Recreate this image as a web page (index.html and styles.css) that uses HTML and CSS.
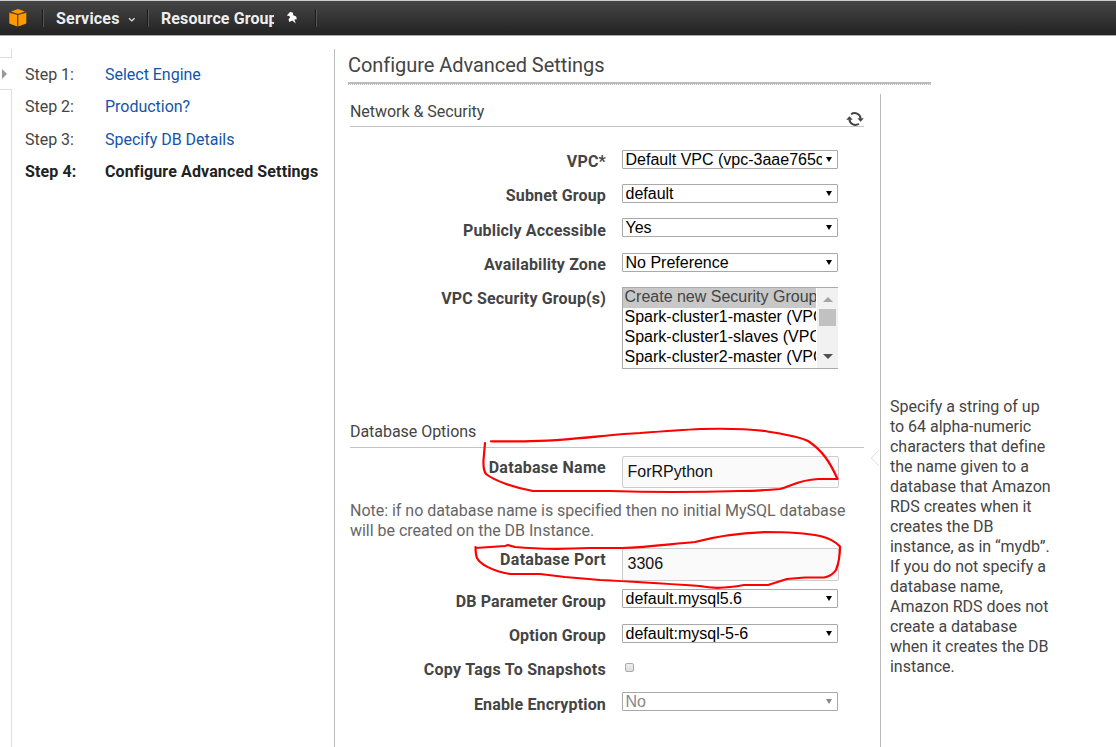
FILE: index.html
```html
<!DOCTYPE html>
<html lang="en">
<head>
<meta charset="utf-8">
<title>Configure Advanced Settings</title>
<link rel="stylesheet" href="styles.css">
</head>
<body>
<header class="topbar">
  <svg class="logo" width="18" height="18" viewBox="0 0 18 18"><path fill="#f90" d="M9 0l7 2.5-7 2.4-7-2.4z"/><path fill="#f90" d="M.3 3.6l8 2.1v11.8l-8-2.9zM17.3 3.6l-8 2.1v11.8l8-2.9z"/><path d="M.3 3.6L9 5.4l8.300-1.800" stroke="#6b430d" stroke-width=".6" fill="none"/></svg>
  <span class="sep sep-a"></span>
  <span class="nav-item services">Services</span>
  <svg class="chev" width="8" height="6" viewBox="0 0 8 6"><path d="M1 1.300l2.800 2.600 2.800-2.600" fill="none" stroke="#ddd" stroke-width="1.4"/></svg>
  <span class="sep sep-b"></span>
  <span class="nav-item groups">Resource Groups</span>
  <svg class="pin" width="12" height="12" viewBox="0 0 12 12"><path fill="#fff" d="M4 0L6.800.6 7.300 3.200l2.900 1.400.6 2.700-2.500.1L9.800 11.500 6.200 8.400 3.300 10 2.500 7.500 4.100 5.300 3.300 3.900.8 3.500z"/></svg>
  <span class="sep sep-c"></span>
</header>
<div class="page">
  <aside class="rail">
    <div class="rail-top"></div>
    <div class="rail-toggle"><svg width="6" height="12" viewBox="0 0 6 12"><path d="M0 1l5 5-5 5z" fill="#999"/></svg></div>
    <div class="rail-bottom"></div>
  </aside>
  <nav class="steps">
    <div class="step"><span class="num">Step 1:</span><a>Select Engine</a></div>
    <div class="step"><span class="num">Step 2:</span><a>Production?</a></div>
    <div class="step"><span class="num">Step 3:</span><a>Specify DB Details</a></div>
    <div class="step current"><span class="num">Step 4:</span><span>Configure Advanced Settings</span></div>
  </nav>
  <main class="main">
    <h1>Configure Advanced Settings</h1>
    <div class="columns">
      <div class="form">
        <h2 class="section-title first">Network &amp; Security
          <svg class="refresh" width="18" height="14" viewBox="0 0 18 14"><g fill="none" stroke="#444" stroke-width="2"><path d="M5.100 2.300A6 6 0 0 1 14.600 6.600"/><path d="M12.900 11.700A6 6 0 0 1 3.400 7.400"/></g><path fill="#444" d="M11.300 6.300h6.500l-3.100 3.400zM.2 7.700h6.500L3.400 4.200z"/></svg>
        </h2>
        <div class="rows network">
          <div class="row"><label>VPC*</label><div class="select"><span>Default VPC (vpc-3aae765c)</span><i></i></div></div>
          <div class="row"><label>Subnet Group</label><div class="select"><span>default</span><i></i></div></div>
          <div class="row tall"><label>Publicly Accessible</label><div class="select"><span>Yes</span><i></i></div></div>
          <div class="row"><label>Availability Zone</label><div class="select"><span>No Preference</span><i></i></div></div>
          <div class="row list-row"><label>VPC Security Group(s)</label>
            <div class="listbox">
              <div class="options">
                <div class="option selected">Create new Security Group</div>
                <div class="option">Spark-cluster1-master (VPC)</div>
                <div class="option">Spark-cluster1-slaves (VPC)</div>
                <div class="option">Spark-cluster2-master (VPC)</div>
              </div>
              <div class="scroll"><b class="up"></b><b class="thumb"></b><b class="down"></b></div>
            </div>
          </div>
        </div>
        <h2 class="section-title second">Database Options</h2>
        <div class="rows database">
          <div class="row name-row wide"><label>Database Name</label><div class="input">ForRPython</div></div>
          <p class="note">Note: if no database name is specified then no initial MySQL database<br>will be created on the DB Instance.</p>
          <div class="row port-row wide"><label>Database Port</label><div class="input port">3306</div></div>
          <div class="row tall"><label>DB Parameter Group</label><div class="select"><span>default.mysql5.6</span><i></i></div></div>
          <div class="row"><label>Option Group</label><div class="select"><span>default:mysql-5-6</span><i></i></div></div>
          <div class="row wide"><label>Copy Tags To Snapshots</label><div class="check"></div></div>
          <div class="row last"><label>Enable Encryption</label><div class="select disabled"><span>No</span><i></i></div></div>
        </div>
      </div>
      <aside class="help">
        <svg class="notch" width="10" height="18" viewBox="0 0 10 18"><path d="M9 1L1.500 9 9 17" fill="none" stroke="#ddd"/></svg>
        <p>Specify a string of up<br>to 64 alpha-numeric<br>characters that define<br>the name given to a<br>database that Amazon<br>RDS creates when it<br>creates the DB<br>instance, as in “mydb”.<br>If you do not specify a<br>database name,<br>Amazon RDS does not<br>create a database<br>when it creates the DB<br>instance.</p>
      </aside>
    </div>
  </main>
</div>
<svg class="marks" width="1116" height="747" viewBox="0 0 1116 747">
  <path d="M491 441.300H524C570 441 610 434 640 433Q680 430 701 429Q740 428 765 431C782 434 798 436 808 441C822 450 830 462 837.500 479H818C798 480 792 486 780 489Q755 491 740 491Q670 493 610 491H533C515 488 495 481 486 474Q483 470 483.500 460L485 443"/>
  <path d="M475.500 548L505 546L508 545L515 547Q545 550 590 548H622C650 547 670 544 695 542C720 535 740 533 765 532Q800 532 820 536Q833 539 840 546.500Q840 560 836 570Q832 576 824 577.500L805 577.500L787 579L768 585H744Q718 590 700 586C670 584 640 582 600 580L565 577L540 574H510C492 571 480 564 477 558Q475.500 554 475.500 547"/>
</svg>
</body>
</html>
```
FILE: styles.css
```css
* { box-sizing: border-box; }
body { margin: 0; height: 747px; overflow: hidden; background: #fff; color: #444; font: 16px/20px Roboto, sans-serif; letter-spacing: -.02px; }
.topbar { display: flex; align-items: center; height: 36px; padding-left: 9px; border-top: 1px solid #ccc; border-bottom: 1px solid #aaa; background: linear-gradient(#444 0, #3b3b3b 30%, #222 100%); color: #eee; }
.logo { flex: none; }
.sep { flex: none; width: 2px; height: 18px; border-left: 1px solid #1b1b1b; border-right: 1px solid #555; }
.sep-a { margin-left: 15px; }
.nav-item { flex: none; overflow: hidden; white-space: nowrap; font-weight: 700; letter-spacing: .1px; line-height: 22px; padding-top: 1px; }
.services { width: 65px; margin-left: 12px; letter-spacing: .2px; }
.chev { margin: 3px 0 0 7px; }
.sep-b { margin-left: 11px; }
.groups { width: 113px; margin-left: 12px; }
.pin { margin-left: 12px; }
.sep-c { margin-left: 17px; }
.page { display: flex; height: 711px; padding-top: 13px; }
.rail { display: flex; flex-direction: column; width: 12px; }
.rail-top { height: 9px; border: solid #ddd; border-width: 0 1px 1px 0; }
.rail-toggle { display: flex; align-items: center; height: 31px; padding: 0 0 0 2px; }
.rail-bottom { flex: 1; border: solid #ddd; border-width: 1px 1px 0 0; }
.steps { width: 323px; padding: 16px 0 0 13px; border-right: 1px solid #bbb; }
.step { display: flex; height: 32.4px; }
.num { width: 80px; }
.step a { color: #1155aa; }
.current { color: #222; font-weight: 700; letter-spacing: .12px; }
.main { width: 781px; padding-left: 13px; }
h1 { width: 583px; height: 36px; margin: 0; padding-top: 4px; font-size: 20px; font-weight: 400; line-height: 24px; letter-spacing: -.05px; background: linear-gradient(#bbb, #bbb) 0 33px / 100% 2px no-repeat, repeating-linear-gradient(90deg, #bbb 0 1px, #fff 1px 2px) 0 35px / 100% 1px no-repeat; }
.columns { display: flex; height: 653px; margin-top: 9px; }
.form { width: 532px; padding: 7px 16px 0 2px; }
.section-title { display: flex; justify-content: space-between; height: 26px; margin: 0; border-bottom: 1px solid #c4c4c4; font-size: 16px; font-weight: 400; line-height: 20px; letter-spacing: -.04px; }
.first { line-height: 22px; }
.refresh { margin: 11px 0 0 0; }
.second { margin-top: 53px; }
.network { padding-top: 23px; }
.database { padding-top: 8px; }
.row { display: flex; gap: 16px; height: 34px; }
.tall { height: 35px; }
.row label { width: 256px; padding-top: 2px; text-align: right; font-weight: 700; letter-spacing: .16px; }
.tall label, .last label { padding-top: 3px; }
.wide label { letter-spacing: .28px; }
.select { display: flex; align-items: center; width: 216px; height: 19px; border: 1px solid #a9a9a9; border-radius: 1px; padding: 0 5px 0 2.5px; color: #000; font: 16px/17px "Liberation Sans", Arial, sans-serif; letter-spacing: 0; white-space: nowrap; }
.select span { flex: 1; min-width: 0; height: 18px; overflow: hidden; }
.select i { width: 0; margin-left: 4px; border: solid transparent; border-width: 5px 3px 0; border-top-color: currentColor; }
.disabled { color: #888; }
.list-row { height: 82px; }
.listbox { display: flex; width: 216px; height: 82px; border: 1px solid #a9a9a9; border-right: 0; }
.options { width: 193px; overflow: hidden; color: #000; font: 16px/20px "Liberation Sans", Arial, sans-serif; letter-spacing: 0; white-space: nowrap; }
.option { height: 20px; padding-left: 1.5px; line-height: 18px; }
.selected { background: #c8c8c8; color: #444; }
.scroll { display: flex; flex-direction: column; align-items: center; width: 21px; margin-left: 1px; padding: 0 2px; background: #f1f1f1; }
.up { margin-top: 9px; border: solid transparent; border-width: 0 5px 5px; border-bottom-color: #a3a3a3; }
.thumb { width: 17px; height: 17px; margin-top: 7px; background: #c1c1c1; }
.down { margin-top: 28px; border: solid transparent; border-width: 5px 5px 0; border-top-color: #505050; }
.input { width: 217px; height: 32px; padding-left: 4.5px; border: 1px solid #ccc; border-radius: 2px; background: #fafafa; color: #111; font: 16px/29px "Liberation Sans", Arial, sans-serif; letter-spacing: 0; }
.name-row { height: 45px; }
.note { height: 47px; margin: 0; color: #666; white-space: nowrap; }
.port-row { height: 41px; }
.port { height: 33px; }
.check { width: 9px; height: 9px; margin: 5px 0 0 3px; border: 1px solid #aaa; border-radius: 2px; background: linear-gradient(#eee, #ddd); }
.help { position: relative; width: 200px; padding: 303px 0 0 9px; border-left: 1px solid #bbb; white-space: nowrap; }
.help p { margin: 0; }
.notch { position: absolute; left: -11px; top: 355px; background: #fff; }
.marks { position: absolute; left: 0; top: 0; pointer-events: none; fill: none; stroke: #f00; stroke-width: 2.2; stroke-linejoin: round; stroke-linecap: round; }
```
